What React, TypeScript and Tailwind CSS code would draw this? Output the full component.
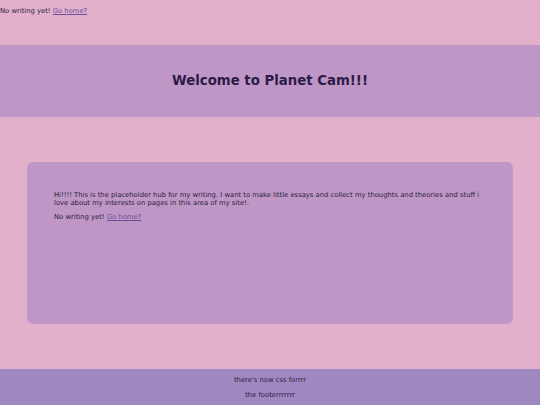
export default function App() {
  return (
    <div
      className="min-h-[405px] bg-[#e2b0cb] text-[#2b1d40] text-[6.8px] leading-[8px] flex flex-col"
      style={{ fontFamily: '"DejaVu Sans", Verdana, sans-serif' }}
    >
      <p className="pt-[7px] h-[45px]">
        No writing yet!{' '}
        <a href="#" className="underline text-[#6a4f99]">Go home?</a>
      </p>

      <header className="h-[72px] bg-[#bf97c6] flex items-center justify-center">
        <h1 className="text-[13.3px] leading-none font-bold text-[#2d1a48]">Welcome to Planet Cam!!!</h1>
      </header>

      <main className="px-[27px] pt-[45px] pb-[45px]">
        <div className="h-[162px] rounded-[6px] bg-[#bf97c6] px-[27px] pt-[28.5px]">
          <p>
            Hi!!!! This is the placeholder hub for my writing. I want to make little essays and collect my thoughts and theories and stuff i love about my interests on pages in this area of my site!.
          </p>
          <p className="mt-[6.5px]">
            No writing yet!{' '}
            <a href="#" className="underline text-[#6a4f99]">Go home?</a>
          </p>
        </div>
      </main>

      <footer className="h-[36px] bg-[#9f87c0] flex flex-col items-center pt-[7px] gap-[7px]">
        <p>there's now css forrrr</p>
        <p>the footerrrrrrr</p>
      </footer>
    </div>
  );
}
